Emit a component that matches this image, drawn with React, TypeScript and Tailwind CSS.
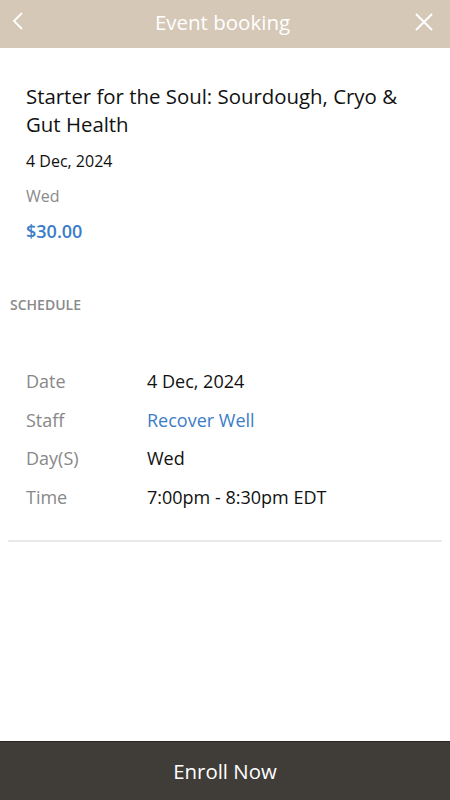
import React from "react";

const font = { fontFamily: '"Open Sans", "Noto Sans", sans-serif' };

export default function App() {
  const rows: [string, string, boolean][] = [
    ["Date", "4 Dec, 2024", false],
    ["Staff", "Recover Well", true],
    ["Day(S)", "Wed", false],
    ["Time", "7:00pm - 8:30pm EDT", false],
  ];
  return (
    <div style={font} className="w-[450px] h-[800px] bg-white flex flex-col relative overflow-hidden">
      <div className="h-[48px] bg-[#d5c8b7] flex items-center justify-between px-[10px] shrink-0">
        <svg width="14" height="22" viewBox="0 0 14 22" className="ml-[1px] -mt-[6px]">
          <path d="M11 3 L3 11 L11 19" stroke="white" strokeWidth="1.8" fill="none" />
        </svg>
        <div className="text-white text-[20.5px] -mt-[3px] ml-[6px]">Event booking</div>
        <svg width="20" height="20" viewBox="0 0 20 20" className="mr-[6px] -mt-[4px]">
          <path d="M2 2 L18 18 M18 2 L2 18" stroke="white" strokeWidth="2" fill="none" />
        </svg>
      </div>
      <div className="flex-1">
        <div className="px-[26px] pt-[34px]">
          <div className="text-[20.4px] leading-[28px] text-[#111]">
            Starter for the Soul: Sourdough, Cryo &amp; Gut Health
          </div>
          <div className="text-[16px] text-[#111] mt-[12px] leading-[22px]">4 Dec, 2024</div>
          <div className="text-[16px] text-[#8a8a8a] mt-[13px] leading-[22px]">Wed</div>
          <div className="text-[18px] font-semibold text-[#3b7dc8] mt-[12px] leading-[24px]">$30.00</div>
        </div>
        <div className="px-[10px] mt-[52px] text-[14px] font-semibold text-[#8a8a8a] leading-[20px]">SCHEDULE</div>
        <div className="mx-[8px] mt-[47px] pb-[23px]">
          {rows.map(([l, v, blue]) => (
            <div key={l} className="flex items-center h-[38.7px] px-[18px]">
              <div className="w-[121px] text-[18px] text-[#888]">{l}</div>
              <div className={"text-[18px] " + (blue ? "text-[#3b7dc8]" : "text-[#111]")}>{v}</div>
            </div>
          ))}
        </div>
        <div className="mx-[8px] h-[2px] bg-[#e8e8e8] rounded-full"></div>
      </div>
      <div className="h-[59px] bg-[#403d38] border-t border-[#2a2824] flex items-center justify-center shrink-0">
        <div className="text-white text-[20.4px]">Enroll Now</div>
      </div>
    </div>
  );
}
